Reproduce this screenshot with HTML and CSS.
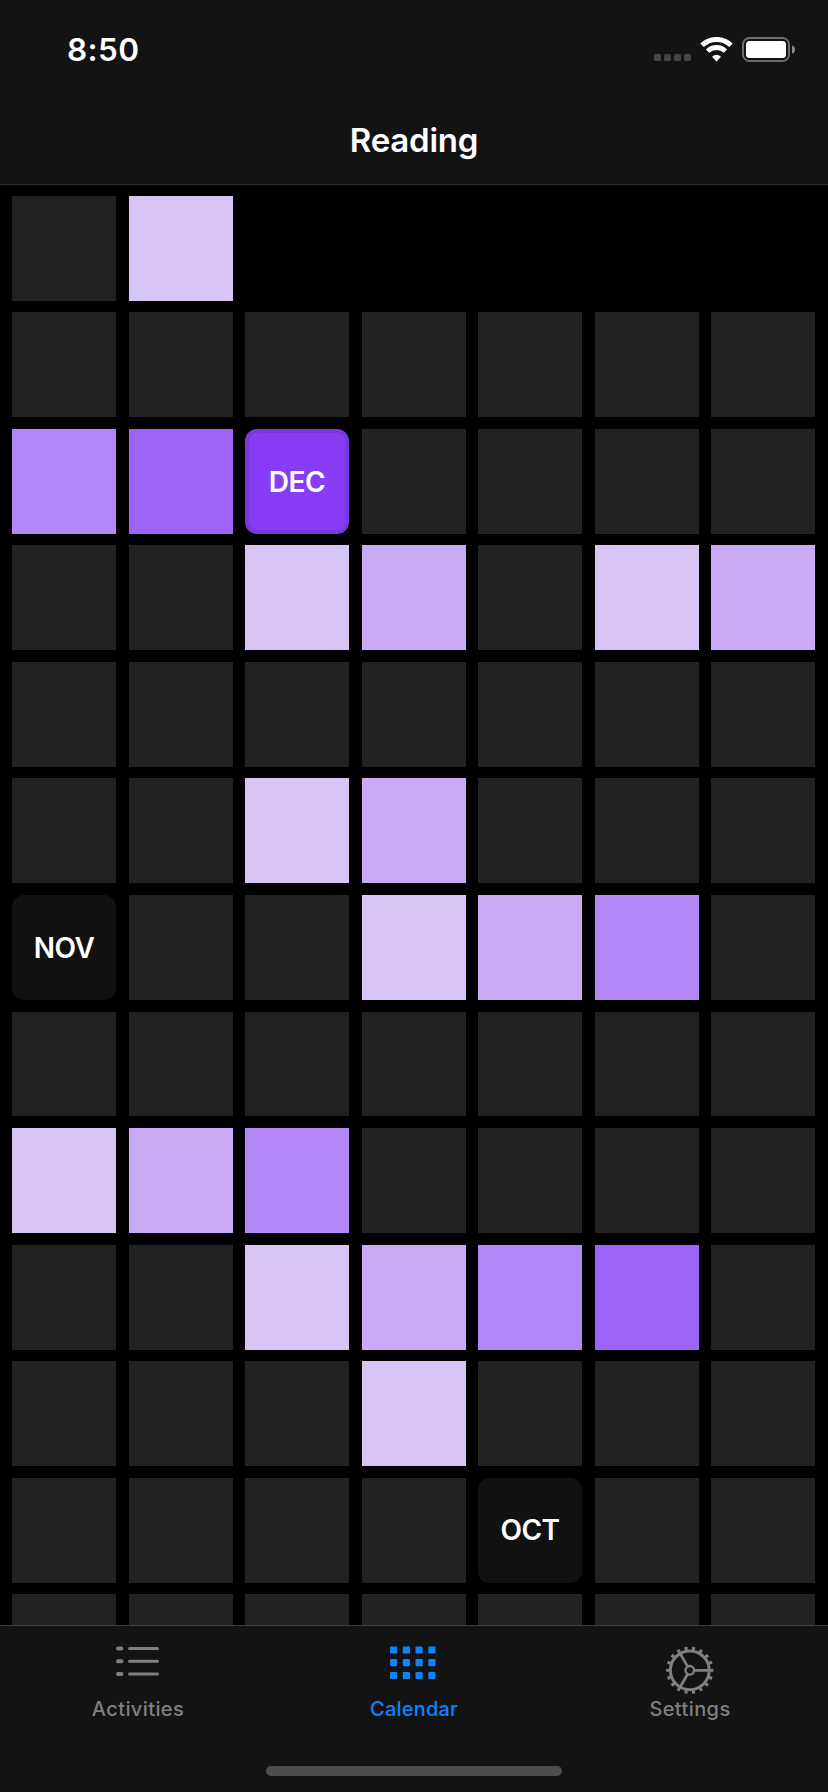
FILE: index.html
```html
<!DOCTYPE html>
<html lang="en">
<head>
<meta charset="utf-8">
<title>Reading</title>
<link rel="stylesheet" href="styles.css">
</head>
<body>
<div class="app">
  <header class="header">
    <div class="status">
      <span class="time">8:50</span>
      <svg class="indicators" width="142" height="26" viewBox="0 0 142 26">
        <g fill="#454545"><rect x="0" y="17" width="7" height="7" rx="1.6"/><rect x="10" y="17" width="7" height="7" rx="1.6"/><rect x="20" y="17" width="7" height="7" rx="1.6"/><rect x="30" y="17" width="7" height="7" rx="1.6"/></g>
        <g fill="none" stroke="#fff"><path d="M48 8.3a20.8 20.8 0 0 1 29 0" stroke-width="5"/><path d="M53.6 14.1a12.8 12.8 0 0 1 17.8 0" stroke-width="4.8"/></g>
        <path d="M62.5 24.4 58 19.8q4.5-4.2 9 0z" fill="#fff"/>
        <rect x="89" y="1" width="46" height="23" rx="6.5" fill="none" stroke="#6d6d6d" stroke-width="2"/>
        <rect x="92" y="4" width="40" height="17" rx="3.5" fill="#fff"/>
        <path d="M138 8.3q3 1 3 4.2t-3 4.2z" fill="#8a8a8a"/>
      </svg>
    </div>
    <h1 class="title">Reading</h1>
  </header>
  <main class="calendar">
    <i class="day"></i><i class="day l1"></i><i class="none"></i><i class="none"></i><i class="none"></i><i class="none"></i><i class="none"></i>
    <i class="day"></i><i class="day"></i><i class="day"></i><i class="day"></i><i class="day"></i><i class="day"></i><i class="day"></i>
    <i class="day l3"></i><i class="day l4"></i><div class="month l5"><span>DEC</span></div><i class="day"></i><i class="day"></i><i class="day"></i><i class="day"></i>
    <i class="day"></i><i class="day"></i><i class="day l1"></i><i class="day l2"></i><i class="day"></i><i class="day l1"></i><i class="day l2"></i>
    <i class="day"></i><i class="day"></i><i class="day"></i><i class="day"></i><i class="day"></i><i class="day"></i><i class="day"></i>
    <i class="day"></i><i class="day"></i><i class="day l1"></i><i class="day l2"></i><i class="day"></i><i class="day"></i><i class="day"></i>
    <div class="month"><span>NOV</span></div><i class="day"></i><i class="day"></i><i class="day l1"></i><i class="day l2"></i><i class="day l3"></i><i class="day"></i>
    <i class="day"></i><i class="day"></i><i class="day"></i><i class="day"></i><i class="day"></i><i class="day"></i><i class="day"></i>
    <i class="day l1"></i><i class="day l2"></i><i class="day l3"></i><i class="day"></i><i class="day"></i><i class="day"></i><i class="day"></i>
    <i class="day"></i><i class="day"></i><i class="day l1"></i><i class="day l2"></i><i class="day l3"></i><i class="day l4"></i><i class="day"></i>
    <i class="day"></i><i class="day"></i><i class="day"></i><i class="day l1"></i><i class="day"></i><i class="day"></i><i class="day"></i>
    <i class="day"></i><i class="day"></i><i class="day"></i><i class="day"></i><div class="month"><span>OCT</span></div><i class="day"></i><i class="day"></i>
    <i class="day"></i><i class="day"></i><i class="day"></i><i class="day"></i><i class="day"></i><i class="day"></i><i class="day"></i>
  </main>
  <footer class="footer">
    <nav class="tabs">
      <a class="tab">
        <svg width="56" height="56" viewBox="0 0 56 56" fill="#808080">
          <rect x="6" y="6.5" width="7.4" height="4" rx="2"/><rect x="18" y="7" width="31" height="3" rx="1.5"/>
          <rect x="6" y="19.2" width="7.4" height="4" rx="2"/><rect x="18" y="19.7" width="31" height="3" rx="1.5"/>
          <rect x="6" y="32" width="7.4" height="4" rx="2"/><rect x="18" y="32.5" width="31" height="3" rx="1.5"/>
        </svg>
        <span>Activities</span>
      </a>
      <a class="tab active">
        <svg width="56" height="56" viewBox="0 0 56 56" fill="#0a84ff">
          <rect x="4" y="6.4" width="7.2" height="7.2" rx="1.2"/><rect x="16.8" y="6.4" width="7.2" height="7.2" rx="1.2"/><rect x="29.5" y="6.4" width="7.2" height="7.2" rx="1.2"/><rect x="42.3" y="6.4" width="7.2" height="7.2" rx="1.2"/>
          <rect x="4" y="19.1" width="7.2" height="7.2" rx="1.2"/><rect x="16.8" y="19.1" width="7.2" height="7.2" rx="1.2"/><rect x="29.5" y="19.1" width="7.2" height="7.2" rx="1.2"/><rect x="42.3" y="19.1" width="7.2" height="7.2" rx="1.2"/>
          <rect x="4" y="31.9" width="7.2" height="7.2" rx="1.2"/><rect x="16.8" y="31.9" width="7.2" height="7.2" rx="1.2"/><rect x="29.5" y="31.9" width="7.2" height="7.2" rx="1.2"/><rect x="42.3" y="31.9" width="7.2" height="7.2" rx="1.2"/>
        </svg>
        <span>Calendar</span>
      </a>
      <a class="tab">
        <svg width="56" height="56" viewBox="0 0 56 56" fill="none" stroke="#808080">
          <circle cx="27.8" cy="30.3" r="19.4" stroke-width="3"/>
          <circle cx="27.8" cy="30.3" r="22" stroke-width="3.4" pathLength="180" stroke-dasharray="4 6" stroke-dashoffset="2"/>
          <circle cx="27.8" cy="30.3" r="4.3" stroke-width="2.4"/>
          <path d="M32.6 30.3H46M25.4 26.1 18.2 13.6M25.4 34.5 18.2 47" stroke-width="2.7"/>
        </svg>
        <span>Settings</span>
      </a>
    </nav>
    <div class="home"></div>
  </footer>
</div>
</body>
</html>
```

FILE: styles.css
```css
* { box-sizing: border-box; }
body { margin: 0; background: #000; font-family: Inter, "Liberation Sans", sans-serif; }
.app { width: 828px; height: 1792px; display: flex; flex-direction: column; overflow: hidden; }
.header { height: 185px; flex: none; background: #131313; border-bottom: 1px solid #2a2a2a; color: #fff; }
.status { height: 96px; padding: 37px 33px 0 67px; display: flex; justify-content: space-between; align-items: flex-start; }
.time { font-size: 31.5px; line-height: 25px; font-weight: 600; letter-spacing: 0.4px; }
.indicators { display: block; margin-right: -1px; }
.title { margin: 0; font-size: 33px; line-height: 88px; font-weight: 600; text-align: center; letter-spacing: -0.2px; }
.calendar { flex: 1; min-height: 0; overflow: hidden; padding: 10.8125px 0 0 12px; display: grid; grid-template-columns: repeat(7, 104px); grid-auto-rows: 104.9375px; gap: 11.59375px 12.5px; align-content: start; }
.day { background: #222; }
.month { background: #111; border-radius: 12px; color: #fff; display: flex; align-items: center; justify-content: center; padding-top: 0.5px; font-size: 28px; line-height: 34px; font-weight: 600; letter-spacing: -0.5px; }
.l1 { background: #d8c4f4; }
.l2 { background: #c8aaf4; }
.l3 { background: #b388f6; }
.l4 { background: #9d62f6; }
.l5 { background: #883cf5; border: 4px solid #7b38dd; }
.footer { height: 167px; flex: none; background: #131313; border-top: 1px solid #3d3d3d; }
.tabs { display: grid; grid-template-columns: repeat(3, 1fr); padding-top: 14px; height: 145px; }
.tab { display: flex; flex-direction: column; align-items: center; color: #808080; font-size: 20px; line-height: 26px; font-weight: 500; letter-spacing: 0.4px; }
.tab svg { display: block; }
.active { color: #0a84ff; letter-spacing: 0.2px; }
.home { width: 296px; height: 10px; margin: -5px auto 0; border-radius: 5px; background: #4d4d4d; }
```
